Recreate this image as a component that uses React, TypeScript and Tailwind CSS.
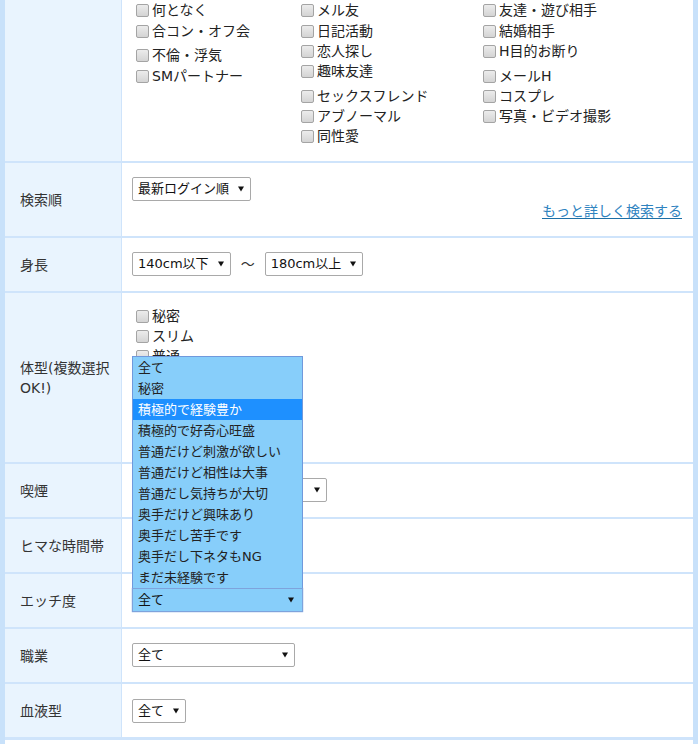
import React from 'react';

const FONT = { fontFamily: '"DejaVu Sans", "Noto Sans CJK JP", sans-serif' };

type Item = { label: string; gap: string };

const purposeCols: Item[][] = [
  [
    { label: '何となく', gap: '' },
    { label: '合コン・オフ会', gap: 'mt-px' },
    { label: '不倫・浮気', gap: 'mt-[4px]' },
    { label: 'SMパートナー', gap: 'mt-px' },
  ],
  [
    { label: 'メル友', gap: '' },
    { label: '日記活動', gap: 'mt-px' },
    { label: '恋人探し', gap: '' },
    { label: '趣味友達', gap: '' },
    { label: 'セックスフレンド', gap: 'mt-[5px]' },
    { label: 'アブノーマル', gap: '' },
    { label: '同性愛', gap: '' },
  ],
  [
    { label: '友達・遊び相手', gap: '' },
    { label: '結婚相手', gap: 'mt-px' },
    { label: 'H目的お断り', gap: '' },
    { label: 'メールH', gap: 'mt-[5px]' },
    { label: 'コスプレ', gap: '' },
    { label: '写真・ビデオ撮影', gap: '' },
  ],
];

const bodyTypes = ['秘密', 'スリム', '普通', '筋肉質', 'ややぽっちゃり', 'ぽっちゃり', '太め'];

const hLevels = [
  '全て',
  '秘密',
  '積極的で経験豊か',
  '積極的で好奇心旺盛',
  '普通だけど刺激が欲しい',
  '普通だけど相性は大事',
  '普通だし気持ちが大切',
  '奥手だけど興味あり',
  '奥手だし苦手です',
  '奥手だし下ネタもNG',
  'まだ未経験です',
];

function Arrow() {
  return (
    <svg width="6" height="6" viewBox="0 0 6 6" className="shrink-0">
      <path d="M0 0.5 H6 L3 5.5 Z" fill="#111" />
    </svg>
  );
}

function Check({ label, className = '' }: { label: string; className?: string }) {
  return (
    <label className={`flex h-[20px] items-center text-[14px] leading-[20px] text-[#222] ${className}`}>
      <span className="ml-[4px] mr-[3px] h-[13px] w-[13px] shrink-0 rounded-[2px] border border-[#a4a4a4] bg-gradient-to-b from-[#ececec] to-[#d4d4d4]" />
      <span className="whitespace-nowrap">{label}</span>
    </label>
  );
}

function Select({ value, width }: { value: string; width?: string }) {
  return (
    <div
      className={`flex h-[24px] items-center rounded-[2px] border border-[#a9a9a9] bg-white pl-[5px] pr-[6px] text-[13px] leading-[20px] text-[#111] ${
        width ? `${width} justify-between` : 'gap-[9px]'
      }`}
    >
      <span className="whitespace-nowrap">{value}</span>
      <Arrow />
    </div>
  );
}

function Row({
  label,
  children,
  pad = 'pt-[14px] pb-[15px]',
}: {
  label: React.ReactNode;
  children?: React.ReactNode;
  pad?: string;
}) {
  return (
    <div className="flex border-b-2 border-[#cfe4fb]">
      <div className="flex w-[117px] shrink-0 items-center border-r border-[#cfe4fb] bg-[#e9f4fe] pl-[15px] text-[14px] leading-[20px] text-[#333]">
        {label}
      </div>
      <div className={`flex-1 bg-white pl-[10px] pr-[11px] ${pad}`}>{children}</div>
    </div>
  );
}

export default function App() {
  return (
    <div className="min-h-[744px] border-x-[5px] border-[#c8e1fa] bg-white" style={FONT}>
      <div className="border-b-[3px] border-[#cfe4fb]">
        <Row label="" pad="pt-0 pb-[15px]">
          <div className="flex">
            {purposeCols.map((col, i) => (
              <div key={i} className={i === 0 ? 'w-[165px]' : i === 1 ? 'w-[182px]' : 'flex-1'}>
                {col.map((it) => (
                  <Check key={it.label} label={it.label} className={it.gap} />
                ))}
              </div>
            ))}
          </div>
        </Row>

        <Row label="検索順" pad="pt-[14px] pb-[15px]">
          <div className="flex">
            <Select value="最新ログイン順" />
          </div>
          <div className="text-right text-[14px] leading-[20px]">
            <a href="#" className="text-[#2f83bf] underline decoration-[#1d6fa6] underline-offset-2">
              もっと詳しく検索する
            </a>
          </div>
        </Row>

        <Row label="身長">
          <div className="flex items-center">
            <Select value="140cm以下" />
            <span className="mx-[10px] text-[14px] text-[#333]">～</span>
            <Select value="180cm以上" />
          </div>
        </Row>

        <Row
          label={
            <span>
              体型(複数選択
              <br />
              OK!)
            </span>
          }
          pad="pt-[13px] pb-[16px]"
        >
          {bodyTypes.map((b) => (
            <Check key={b} label={b} />
          ))}
        </Row>

        <Row label="喫煙">
          <div className="flex">
            <Select value="全て" width="w-[195px]" />
          </div>
        </Row>

        <Row label="ヒマな時間帯">
          <div className="flex">
            <Select value="全て" width="w-[150px]" />
          </div>
        </Row>

        <Row label="エッチ度">
          <div className="flex">
            <div className="relative w-[171px]">
              <ul className="absolute bottom-full left-0 z-10 w-full border border-b-0 border-[#7099dc] bg-[#87cefa] text-[13px] text-[#222]">
                {hLevels.map((o, i) => (
                  <li
                    key={o}
                    className={`flex h-[21px] items-center whitespace-nowrap pl-[5px] leading-[21px] ${
                      i === 2 ? 'bg-[#1e90ff] text-white' : ''
                    }`}
                  >
                    {o}
                  </li>
                ))}
              </ul>
              <div className="flex h-[24px] items-center justify-between border border-[#7ea3dc] bg-[#87cefa] pl-[5px] pr-[8px] text-[13px] text-[#111] shadow-[0_0_1px_#5b8fd6]">
                <span>全て</span>
                <Arrow />
              </div>
            </div>
          </div>
        </Row>

        <Row label="職業">
          <div className="flex">
            <Select value="全て" width="w-[163px]" />
          </div>
        </Row>

        <div className="flex">
          <div className="flex w-[117px] shrink-0 items-center border-r border-[#cfe4fb] bg-[#e9f4fe] pl-[15px] text-[14px] leading-[20px] text-[#333]">
            血液型
          </div>
          <div className="flex-1 bg-white pb-[14px] pl-[10px] pt-[15px]">
            <div className="flex">
              <Select value="全て" />
            </div>
          </div>
        </div>
      </div>
    </div>
  );
}
